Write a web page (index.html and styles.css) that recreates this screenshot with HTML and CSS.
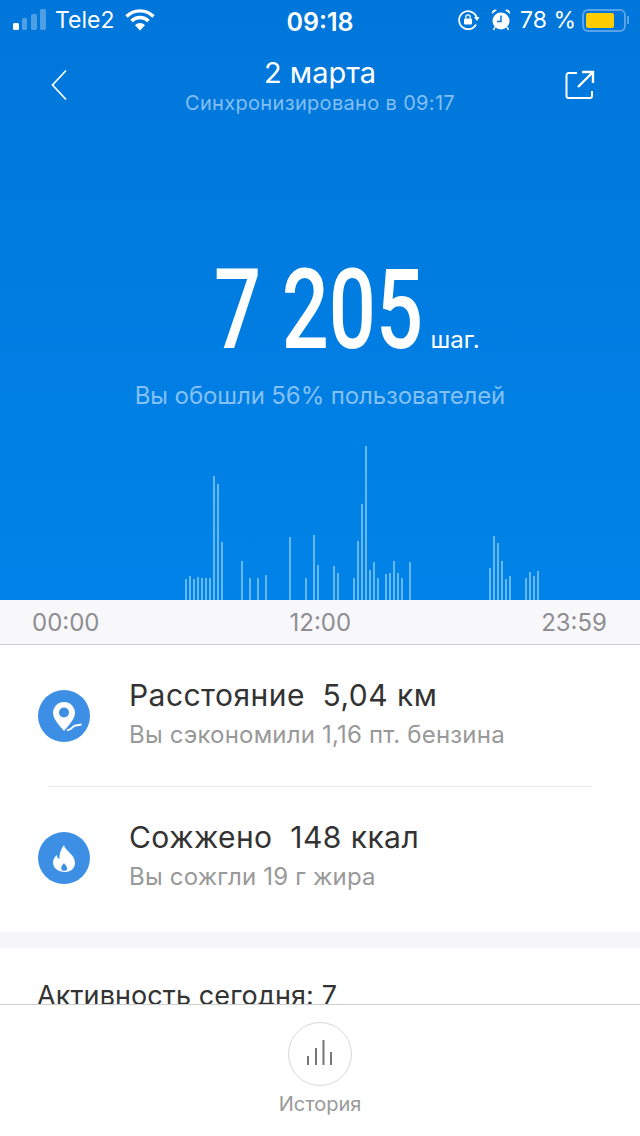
FILE: index.html
```html
<!DOCTYPE html>
<html lang="ru">
<head>
    <meta charset="UTF-8">
    <meta name="viewport" content="width=device-width, initial-scale=1.0">
    <title>Шаги</title>
    <link rel="stylesheet" href="styles.css">
</head>
<body>
<div class="page">
    <div class="hero">
        <div class="status-bar">
            <div class="status-left">
                <svg class="signal" width="34" height="22" viewBox="0 0 34 22">
                    <rect x="0" y="14" width="6" height="7" rx="1.5" fill="#fff"/>
                    <rect x="9" y="9" width="5" height="12" rx="1.5" fill="#fff" opacity=".3"/>
                    <rect x="18" y="5" width="6" height="16" rx="1.5" fill="#fff" opacity=".3"/>
                    <rect x="27" y="0" width="6" height="21" rx="1.5" fill="#fff" opacity=".3"/>
                </svg>
                <span>Tele2</span>
                <svg class="wifi" width="30" height="22" viewBox="0 0 30 22">
                    <path d="M1.5 7.5 A19 19 0 0 1 28.5 7.5" fill="none" stroke="#fff" stroke-width="3.4"/>
                    <path d="M6.5 12 A12 12 0 0 1 23.5 12" fill="none" stroke="#fff" stroke-width="3.4"/>
                    <path d="M10 16.2 A7 7 0 0 1 20 16.2 L15 21.5 Z" fill="#fff"/>
                </svg>
            </div>
            <div class="status-time">09:18</div>
            <div class="status-right">
                <svg width="22" height="20" viewBox="0 0 22 20">
                    <path d="M18 14.5 A9 9 0 1 1 18.5 7" fill="none" stroke="#fff" stroke-width="1.7"/>
                    <path d="M16 7 L21.5 7 L19 11 Z" fill="#fff"/>
                    <rect x="6" y="8.5" width="8" height="6" rx="1" fill="#fff"/>
                    <path d="M7.8 8.5 V7 A2.2 2.2 0 0 1 12.2 7 V8.5" fill="none" stroke="#fff" stroke-width="1.3"/>
                </svg>
                <svg class="alarm" width="20" height="22" viewBox="0 0 20 22">
                    <circle cx="10" cy="12" r="8.5" fill="#fff"/>
                    <path d="M10 6.5 V12.5 H6" fill="none" stroke="#0078dc" stroke-width="1.5"/>
                    <path d="M1 5 A3.5 3.5 0 0 1 6 1 Z M19 5 A3.5 3.5 0 0 0 14 1 Z" fill="#fff"/>
                    <path d="M4 18 L2.5 21 M16 18 L17.5 21" stroke="#fff" stroke-width="1.6"/>
                </svg>
                <span class="battery-text">78 %</span>
                <div class="battery"><div class="battery-fill"></div></div>
                <div class="battery-nub"></div>
            </div>
        </div>

        <div class="nav">
            <svg class="nav-back" width="16" height="32" viewBox="0 0 16 32">
                <path d="M15 1.5 L1.5 16 L15 30.5" fill="none" stroke="#fff" stroke-width="1.7"/>
            </svg>
            <div class="nav-title">
                <div class="nav-date">2 марта</div>
                <div class="nav-sync">Синхронизировано в 09:17</div>
            </div>
            <svg class="nav-share" width="30" height="30" viewBox="0 0 30 30">
                <path d="M12 3 H3.5 A2 2 0 0 0 1.5 5 V26 A2 2 0 0 0 3.5 28 H25 A2 2 0 0 0 27 26 V21" fill="none" stroke="#fff" stroke-width="2"/>
                <path d="M13 17 L27 3 M17 2 H28 V13" fill="none" stroke="#fff" stroke-width="2.4"/>
            </svg>
        </div>

        <div class="steps">
            <span class="steps-value">7 205</span>
            <span class="steps-unit">шаг.</span>
        </div>
        <div class="steps-note">Вы обошли 56% пользователей</div>

        <div class="chart" id="chart"></div>
    </div>

    <div class="axis">
        <span>00:00</span>
        <span>12:00</span>
        <span>23:59</span>
    </div>

    <div class="content">
        <div class="stats">
            <div class="stat-row">
                <svg class="stat-icon" width="52" height="52" viewBox="0 0 52 52">
                    <circle cx="26" cy="26" r="26" fill="#3d8fe6"/>
                    <path fill-rule="evenodd" fill="#fff" d="M26 12 A11 11 0 0 1 37 23 C37 29 30 36 26 41 C22 36 15 29 15 23 A11 11 0 0 1 26 12 Z M26 17.500 A5 5 0 1 0 26 27.500 A5 5 0 1 0 26 17.500 Z"/>
                    <path d="M29 40 C34 41 34 35 38 35.500 L43.500 34.500" fill="none" stroke="#fff" stroke-width="1.8"/>
                </svg>
                <div class="stat-text">
                    <div class="stat-title">Расстояние&nbsp; 5,04 км</div>
                    <div class="stat-sub">Вы сэкономили 1,16 пт. бензина</div>
                </div>
            </div>
            <div class="stat-divider"></div>
            <div class="stat-row">
                <svg class="stat-icon" width="52" height="52" viewBox="0 0 52 52">
                    <circle cx="26" cy="26" r="26" fill="#3d8fe6"/>
                    <path fill-rule="evenodd" fill="#fff" d="M26 13 C27 19 37 22 37 31 C37 36 33 40 27 40 C20 40 15 36 15 30.500 C15 27 17 24.500 19 23 C19 25 20 26.500 21.500 27 C21 22 23 17 26 13 Z M26 31 C24 33.500 22.500 35 23.500 37.500 C24 39 28 39.500 29 37.500 C30 35 27.500 33.500 26 31 Z"/>
                </svg>
                <div class="stat-text">
                    <div class="stat-title">Сожжено&nbsp; 148 ккал</div>
                    <div class="stat-sub">Вы сожгли 19 г жира</div>
                </div>
            </div>
        </div>
        <div class="section-gap"></div>
        <div class="activity">Активность сегодня: 7</div>
    </div>

    <div class="tab-bar">
        <div class="tab-circle">
            <svg class="tab-icon" width="26" height="26" viewBox="0 0 26 26">
                <path d="M1 25 V16 M9 25 V8 M16.500 25 V0 M24 25 V12" fill="none" stroke="#777" stroke-width="2"/>
            </svg>
        </div>
        <div class="tab-label">История</div>
    </div>
</div>

<script src="script.js"></script>
</body>
</html>
```

FILE: styles.css
```css
body {
    font-family: Inter, "Noto Sans", sans-serif;
    margin: 0;
    padding: 0;
    background-color: white;
}
.page {
    height: 1136px;
    display: flex;
    flex-direction: column;
    overflow: hidden;
}

/* blue top part */
.hero {
    height: 600px;
    flex: none;
    display: flex;
    flex-direction: column;
    background: linear-gradient(#0076da, #0083e8);
    color: white;
}
.status-bar {
    height: 40px;
    display: flex;
    align-items: center;
    justify-content: space-between;
    padding: 0 11px 0 13px;
    font-size: 23px;
    position: relative;
}
.status-left {
    display: flex;
    align-items: center;
}
.signal {
    margin-right: 8px;
}
.wifi {
    margin-left: 11px;
}
.status-time {
    position: absolute; /* stays centred whatever the sides do */
    left: 0;
    right: 0;
    top: 7px;
    text-align: center;
    font-size: 25px;
    font-weight: 600;
}
.status-right {
    display: flex;
    align-items: center;
}
.alarm {
    margin-left: 11px;
}
.battery-text {
    margin-left: 9px;
}
.battery {
    width: 44px;
    height: 23px;
    margin-left: 6px;
    box-sizing: border-box;
    border: 2px solid #5aa3ea;
    border-radius: 6px;
    padding: 2px;
}
.battery-fill {
    width: 28px;
    height: 15px;
    background-color: #ffcc00;
    border-radius: 2px;
}
.battery-nub {
    width: 2px;
    height: 8px;
    margin-left: 1px;
    background-color: #5aa3ea;
}

.nav {
    height: 84px;
    display: flex;
    align-items: flex-start;
    justify-content: space-between;
    padding: 0 45px 0 51px;
}
.nav-back {
    margin-top: 29px;
    margin-right: 8px;
}
.nav-share {
    margin-top: 30px;
}
.nav-title {
    text-align: center;
    padding-top: 16px;
}
.nav-date {
    font-size: 29px;
    line-height: 34px;
}
.nav-sync {
    margin-top: 1px;
    font-size: 20px;
    line-height: 24px;
    color: #84bff3;
    letter-spacing: 0.33px;
}

.steps {
    display: flex;
    justify-content: center;
    align-items: baseline;
    margin-top: 131px;
    height: 110px;
    padding-left: 54px;
}
.steps-value {
    width: 208px;
    font-family: Roboto, "Liberation Sans", sans-serif;
    font-size: 112px;
    font-weight: 500;
    line-height: 110px;
    white-space: nowrap;
    transform: scaleX(0.74); /* no condensed face installed */
    transform-origin: left;
}
.steps-unit {
    font-size: 24px;
    margin-left: 8px;
}
.steps-note {
    margin-top: 17px;
    text-align: center;
    font-size: 24px;
    line-height: 28px;
    color: #84c1f5;
    letter-spacing: -0.1px;
}

.chart {
    margin-top: auto;
    padding-left: 185px;
    display: flex;
    align-items: flex-end;
    gap: 2px;
}
.chart-bar {
    width: 2px;
    background-color: #66b8f5;
}

/* time axis under the chart */
.axis {
    height: 44px;
    flex: none;
    display: flex;
    align-items: center;
    justify-content: space-between;
    padding: 0 33px 0 32px;
    background-color: #f8f7f9;
    border-bottom: 1px solid #cfcfd2;
    font-size: 24px;
    color: #8e8e93;
}

.content {
    flex: 1;
    min-height: 0;
    overflow: hidden;
}
.stats {
    height: 287px;
}
.stat-row {
    height: 141px;
    box-sizing: border-box;
    padding: 0 0 6px 38px;
    display: flex;
    align-items: center;
}
.stat-icon {
    flex: none;
    margin-right: 39px;
    position: relative;
    top: 3px; /* icon sits on the row middle, text block a bit higher */
}
.stat-title {
    font-size: 30px;
    line-height: 38px;
    margin-bottom: 6px;
    letter-spacing: 0.45px;
    color: #333333;
}
.stat-sub {
    font-size: 24px;
    line-height: 30px;
    letter-spacing: 0.2px;
    color: #999999;
}
.stat-divider {
    height: 1px;
    margin: 0 48px;
    background-color: #ebebeb;
}
.section-gap {
    height: 16px;
    background-color: #f6f6f8;
}
.activity {
    padding: 32px 37px 0;
    font-size: 27px;
    line-height: 32px;
    letter-spacing: 0.1px;
    color: #333333;
}

.tab-bar {
    height: 131px;
    flex: none;
    display: flex;
    flex-direction: column;
    align-items: center;
    border-top: 1px solid #cfcfd2;
    background-color: white;
}
.tab-circle {
    width: 64px;
    height: 64px;
    margin-top: 17px;
    box-sizing: border-box;
    border: 1px solid #d8d8da;
    border-radius: 50%;
    display: flex;
    align-items: center;
    justify-content: center;
}
.tab-icon {
    margin-bottom: 3px;
}
.tab-label {
    margin-top: 6px;
    font-size: 20px;
    line-height: 24px;
    color: #999999;
}
```

FILE: script.js
```js
// steps per slot, first slot starts at the chart padding
var steps = [
    21, 24, 21, 23, 22, 22, 22, 124, 116, 58,
    0, 0, 0, 0, 39, 0, 22, 0, 22, 0,
    25, 0, 0, 0, 0, 0, 63, 0, 0, 0,
    22, 0, 65, 35, 0, 0, 0, 34, 27, 0,
    0, 0, 22, 59, 96, 154, 30, 38, 22, 0,
    26, 27, 39, 27, 22, 0, 38, 0, 0, 0,
    0, 0, 0, 0, 0, 0, 0, 0, 0, 0,
    0, 0, 0, 0, 0, 0, 32, 64, 57, 39,
    21, 24, 0, 0, 0, 22, 28, 24, 29
];

var chart = document.getElementById('chart');
steps.forEach(function (value) {
    var bar = document.createElement('div');
    bar.className = 'chart-bar';
    bar.style.height = value + 'px';
    chart.appendChild(bar);
});
```
